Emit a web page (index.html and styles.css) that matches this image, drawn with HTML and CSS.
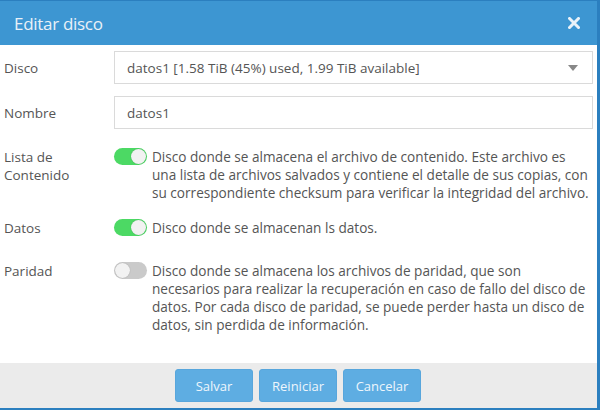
FILE: index.html
```html
<!DOCTYPE html>
<html>
<head>
<meta charset="utf-8">
<link rel="stylesheet" href="styles.css">
</head>
<body>
<div class="dialog">
  <div class="header">
    <span class="title">Editar disco</span>
    <svg class="close" width="12" height="12" viewBox="0 0 12 12"><path d="M1.5 1.5 L10.5 10.5 M10.5 1.5 L1.5 10.5" stroke="#eaf2f9" stroke-width="3" stroke-linecap="square"/></svg>
  </div>
  <div class="body">
    <div class="row row-field">
      <div class="label">Disco</div>
      <div class="field select">
        <span>datos1 [1.58 TiB (45%) used, 1.99 TiB available]</span>
        <svg class="caret" width="10" height="6" viewBox="0 0 10 6"><path d="M0 0 H10 L5 6 Z" fill="#888"/></svg>
      </div>
    </div>
    <div class="row row-field row-nombre">
      <div class="label">Nombre</div>
      <div class="field"><span>datos1</span></div>
    </div>
    <div class="row row-toggle row-lista">
      <div class="label">Lista de<br>Contenido</div>
      <div class="opt">
        <span class="switch on"></span>
        <p class="desc">Disco donde se almacena el archivo de contenido. Este archivo es<br>una lista de archivos salvados y contiene el detalle de sus copias, con<br>su correspondiente checksum para verificar la integridad del archivo.</p>
      </div>
    </div>
    <div class="row row-toggle row-datos">
      <div class="label">Datos</div>
      <div class="opt">
        <span class="switch on"></span>
        <p class="desc">Disco donde se almacenan ls datos.</p>
      </div>
    </div>
    <div class="row row-toggle row-paridad">
      <div class="label">Paridad</div>
      <div class="opt">
        <span class="switch"></span>
        <p class="desc">Disco donde se almacena los archivos de paridad, que son<br>necesarios para realizar la recuperación en caso de fallo del disco de<br>datos. Por cada disco de paridad, se puede perder hasta un disco de<br>datos, sin perdida de información.</p>
      </div>
    </div>
  </div>
  <div class="footer">
    <button class="btn">Salvar</button>
    <button class="btn">Reiniciar</button>
    <button class="btn">Cancelar</button>
  </div>
</div>
</body>
</html>
```
FILE: styles.css
```css
* { box-sizing: border-box; }
html, body { margin: 0; padding: 0; }
body {
  width: 600px;
  height: 410px;
  overflow: hidden;
  background: #ffffff;
  font-family: "Open Sans", "Liberation Sans", sans-serif;
  font-size: 13.5px;
  color: #555555;
}
.dialog {
  width: 600px;
  height: 410px;
  border-top: 1px solid #2b7fbf;
  border-right: 3px solid #2b7fbf;
  border-bottom: 2px solid #2b7fbf;
  display: flex;
  flex-direction: column;
}
.header {
  height: 44px;
  background: #3d96d2;
  display: flex;
  align-items: center;
  justify-content: space-between;
  padding: 0 17px 0 14px;
  flex: none;
}
.title {
  color: #e9f1f8;
  font-size: 17px;
  letter-spacing: -0.3px;
}
.close { display: block; }
.body {
  flex: 1;
  padding: 6px 4px 0 4px;
}
.row {
  display: flex;
}
.label {
  width: 110px;
  flex: none;
  line-height: 18px;
}
.row-field { align-items: center; }
.row-nombre { margin-top: 12px; }
.field {
  flex: 1;
  height: 33px;
  border: 1px solid #dadada;
  display: flex;
  align-items: center;
  justify-content: space-between;
  padding: 0 14px 0 12px;
  color: #555;
}
.caret { display: block; }
.opt {
  flex: 1;
  display: flex;
  align-items: flex-start;
}
.row-lista { margin-top: 19px; }
.row-datos { margin-top: 17px; }
.row-paridad { margin-top: 25px; }
.switch {
  flex: none;
  width: 33px;
  height: 17px;
  border-radius: 9px;
  background: #cacaca;
  margin: 0 5px 0 0;
  position: relative;
}
.switch::after {
  content: "";
  position: absolute;
  top: 1px;
  left: 1px;
  width: 15px;
  height: 15px;
  border-radius: 50%;
  background: #f2f2f2;
  box-shadow: 0 0 1px rgba(0,0,0,0.3);
}
.switch.on { background: #4cd964; }
.switch.on::after { left: 17px; }
.desc {
  margin: 0;
  font-size: 13.6px;
  line-height: 18px;
  white-space: nowrap;
}
.footer {
  height: 45px;
  flex: none;
  background: #ebebeb;
  display: flex;
  align-items: center;
  gap: 6px;
  padding-left: 175px;
}
.btn {
  width: 78px;
  height: 33px;
  border: 1px solid #58a6dc;
  border-radius: 3px;
  background: #5eade2;
  color: #eef6fc;
  font-family: "Open Sans", "Liberation Sans", sans-serif;
  font-size: 13px;
  padding: 0;
}
```
